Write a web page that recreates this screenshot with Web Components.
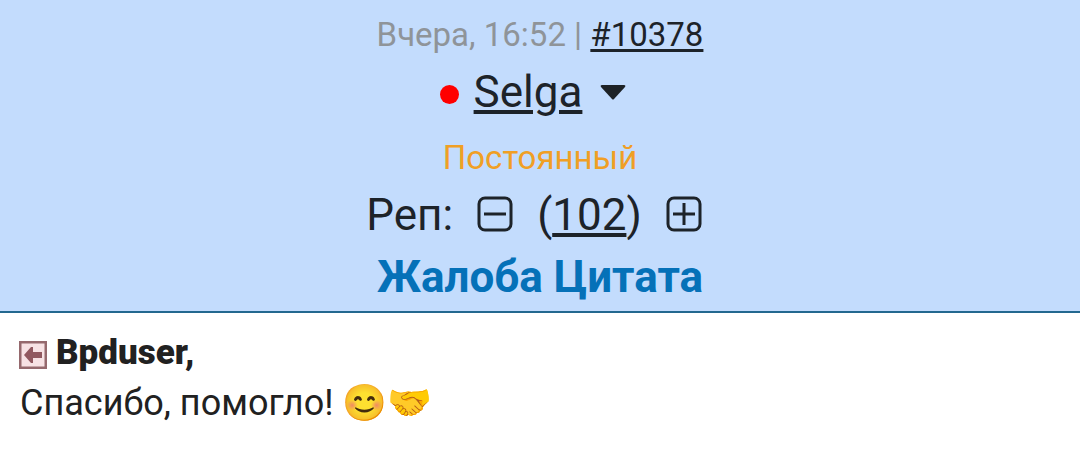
<!DOCTYPE html>
<html lang="ru">
<head>
<meta charset="utf-8">
<meta name="viewport" content="width=device-width, initial-scale=1">
<title>Сообщение #10378</title>
<style>
  body { margin: 0; background: #fff; color: #212121; font-family: Roboto, "Noto Sans", sans-serif; }
</style>
</head>
<body>
<forum-post></forum-post>
<script>
const define = (name, html) => {
  const template = document.createElement('template');
  template.innerHTML = html;
  customElements.define(name, class extends HTMLElement {
    constructor() {
      super();
      this.attachShadow({ mode: 'open' }).append(template.content.cloneNode(true));
    }
  });
};

define('post-meta', `
  <style>
    :host { display: block; font-size: 33px; line-height: 48px; color: #8f9499; }
    ::slotted(a) { color: #1d2329; text-decoration-thickness: 3px; text-underline-offset: 3px; }
  </style>
  <slot></slot>`);

define('post-author', `
  <style>
    :host { display: flex; justify-content: center; align-items: center; gap: 15px; padding-right: 14px; font-size: 44px; line-height: 66px; color: #1d2329; }
    i { width: 19px; height: 19px; border-radius: 50%; background: #f00; margin-top: 4px; }
    button { display: flex; padding: 0; margin: 0 0 0 3px; border: 0; background: none; color: inherit; }
    ::slotted(a) { color: inherit; text-decoration-thickness: 4px; text-underline-offset: 3px; }
  </style>
  <i title="Не в сети"></i>
  <slot></slot>
  <button aria-label="Меню пользователя"><svg width="26" height="15" viewBox="0 0 26 15"><path d="M2 0H24Q26 0 25 2L14 14Q13 15 12 14L1 2Q0 0 2 0Z" fill="#1d2226"/></svg></button>`);

define('post-rank', `
  <style>:host { display: block; padding-top: 5px; font-size: 33px; line-height: 56px; color: #f09f25; }</style>
  <slot></slot>`);

define('rep-button', `
  <style>
    :host { display: flex; margin-bottom: 3px; }
    button { display: flex; padding: 0; border: 0; background: none; color: inherit; }
    .v { display: none; }
    :host([kind="plus"]) .v { display: inline; }
  </style>
  <button aria-label="Изменить репутацию"><svg width="36" height="36" viewBox="0 0 36 36" fill="none" stroke="#1d2329" stroke-width="3"><rect x="2" y="2" width="32" height="32" rx="6"/><path d="M7 18H29"/><path class="v" d="M18 7V29"/></svg></button>`);

define('post-reputation', `
  <style>
    :host { display: flex; justify-content: center; align-items: center; gap: 24px; padding-right: 12px; font-size: 44px; line-height: 58px; color: #1d2329; }
    a { color: inherit; text-decoration-thickness: 4px; text-underline-offset: 3px; }
  </style>
  <span>Реп:</span>
  <rep-button kind="minus"></rep-button>
  <span>(<a href="#rep"><slot></slot></a>)</span>
  <rep-button kind="plus"></rep-button>`);

define('post-actions', `
  <style>
    :host { display: block; font-size: 44px; line-height: 66px; font-weight: 700; }
    a { color: #0571b8; text-decoration: none; }
  </style>
  <a href="#report">Жалоба</a> <a href="#quote">Цитата</a>`);

define('post-header', `
  <style>:host { display: block; padding: 11px 16px 1px; text-align: center; background: #c3dcfd; border-bottom: 2px solid #23688f; }</style>
  <slot></slot>`);

define('post-body', `
  <style>
    :host { display: block; padding: 15px 20px; font-size: 36px; line-height: 50px; }
    p { margin: 0; }
    .to { display: flex; align-items: center; gap: 9px; font-size: 35px; font-weight: 700; }
    .to a { display: flex; margin: 3px 0 0 -1px; }
  </style>
  <p class="to">
    <a href="#source" aria-label="К сообщению"><svg width="28" height="28" viewBox="0 0 28 28"><rect x="1" y="1" width="26" height="26" fill="#f7e2e4" stroke="#95696d" stroke-width="3"/><path d="M5 14L12 6H14V11H23V17H14V22H12Z" fill="#91585f"/></svg></a>
    <slot name="recipient"></slot>
  </p>
  <p><slot></slot></p>`);

define('forum-post', `
  <style>:host { display: block; }</style>
  <post-header>
    <post-meta>Вчера, 16:52 | <a href="#10378">#10378</a></post-meta>
    <post-author><a href="#selga">Selga</a></post-author>
    <post-rank>Постоянный</post-rank>
    <post-reputation>102</post-reputation>
    <post-actions></post-actions>
  </post-header>
  <post-body><b slot="recipient">Bpduser,</b>Спасибо, помогло! 😊🤝</post-body>`);
</script>
</body>
</html>
